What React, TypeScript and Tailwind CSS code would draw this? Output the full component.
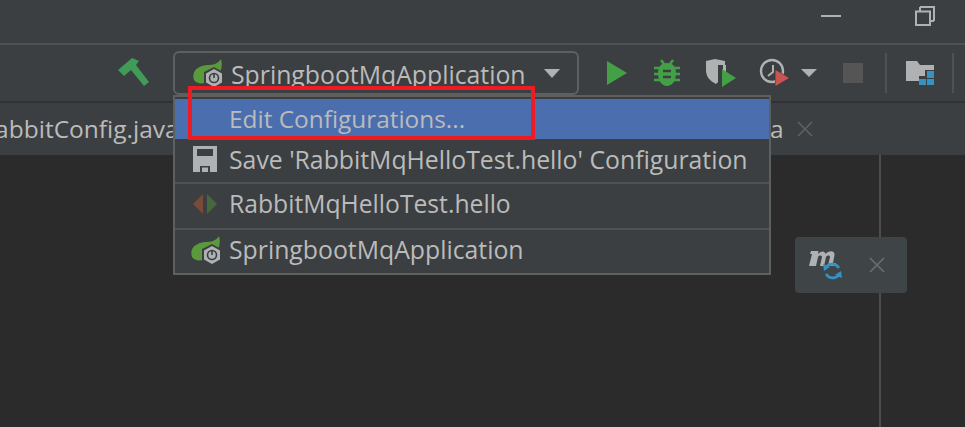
const font = { fontFamily: '"Open Sans", "Noto Sans", sans-serif' }

function SpringIcon() {
  return (
    <svg width="32" height="28" viewBox="0 0 32 28" className="shrink-0">
      <path d="M1 21 C-2 11 6 7 14 6 C20 6 25 5 28 0 C30 7 28 13 24 17 L12 24 C7 25 3 24 1 21Z" fill="#5b9a3c" />
      <path d="M21 8 L30 13 L30 24 L21 29 L11 24 L11 13 Z" fill="#3c3f41" />
      <path d="M21 10 L29 14.500 L29 23.500 L21 28 L13 23.500 L13 14.500 Z" fill="#afb1b3" />
      <circle cx="21" cy="19" r="4.500" fill="none" stroke="#3c3f41" strokeWidth="1.600" />
      <path d="M21 15 V19" stroke="#3c3f41" strokeWidth="1.600" />
    </svg>
  )
}

function HammerIcon() {
  return (
    <svg width="34" height="32" viewBox="0 0 34 32">
      <path d="M1 13 L15 1 L22 4 L19 8 L32 25 L27 29 L14 13 L7 19 Z" fill="#3f9b57" />
    </svg>
  )
}

function BugIcon() {
  return (
    <svg width="26" height="28" viewBox="0 0 26 28">
      <path d="M7 1 L10 5 M19 1 L16 5" stroke="#43a047" strokeWidth="2.500" />
      <path d="M0 9 H26 M0 15 H26 M0 21 H26" stroke="#43a047" strokeWidth="2.500" />
      <path d="M13 4 C19 4 22 8 22 14 C22 22 18 27 13 27 C8 27 4 22 4 14 C4 8 7 4 13 4Z" fill="#43a047" />
      <path d="M9 12 H17 M9 18 H17" stroke="#3c3f41" strokeWidth="2.500" />
    </svg>
  )
}

function CoverageIcon() {
  return (
    <svg width="32" height="30" viewBox="0 0 32 30">
      <path d="M1 3 L10 1 L20 3 L20 7 L13 7 L13 24 L11 26 C5 23 1 19 1 12Z" fill="#afb1b3" />
      <path d="M18 7 H21 V14 L18 18Z" fill="#afb1b3" />
      <path d="M17 11 L31 20 L17 29Z" fill="#43a047" />
    </svg>
  )
}

function ProfilerIcon() {
  return (
    <svg width="32" height="30" viewBox="0 0 32 30">
      <circle cx="13" cy="13" r="11" fill="none" stroke="#afb1b3" strokeWidth="2.400" />
      <path d="M14 7 V14 L9 18" fill="none" stroke="#afb1b3" strokeWidth="2" />
      <path d="M16 11 L31 20 L16 29Z" fill="#3c3f41" />
      <path d="M16.500 12 L30 20 L16.500 28Z" fill="#c75450" />
    </svg>
  )
}

function FolderIcon() {
  return (
    <svg width="30" height="26" viewBox="0 0 30 26">
      <path d="M1 1 H12 L15 5 H29 V10 H20 V16 H14 V21 H1 Z" fill="#afb1b3" />
      <path d="M22 11 H29 V18 H22Z M14 19 H21 V25 H14Z M22 19 H29 V25 H22Z" fill="#3592c4" />
    </svg>
  )
}

function SaveIcon() {
  return (
    <svg width="24" height="26" viewBox="0 0 24 26" className="shrink-0">
      <path d="M0 0 H24 V26 H0Z" fill="#afb1b3" />
      <path d="M4 3 H20 V10 H4Z" fill="#3c3f41" />
      <path d="M7 20 H17 V26 H7Z" fill="#3c3f41" />
      <path d="M9 21.500 H15 V26 H9Z" fill="#afb1b3" />
    </svg>
  )
}

function RunConfigIcon() {
  return (
    <svg width="24" height="20" viewBox="0 0 24 20" className="shrink-0">
      <path d="M10 0 V20 L0 10Z" fill="#7a4b38" />
      <path d="M14 0 V20 L24 10Z" fill="#47683f" />
    </svg>
  )
}

function MavenIcon() {
  return (
    <svg width="34" height="32" viewBox="0 0 34 32">
      <path d="M0 17 L3 5 L1 5 L2 2 H9.500 L9 5 C12 1.500 16 1.500 16.500 5 C19.500 1.500 26 1 25.500 6 L24 14 H27 L26 17 H19 L21 8 C21 6 18 6 17 8 L15 17 H11 L13 8 C13 6 10 6 9 8 L7 17Z" fill="#afb1b3" />
      <path d="M30 19 A8 8 0 0 0 17 18 M17 25 A8 8 0 0 0 30 26" fill="none" stroke="#3592c4" strokeWidth="2.600" />
      <path d="M14 15 L21 18 L15 22Z M33 29 L26 26 L32 22Z" fill="#3592c4" />
    </svg>
  )
}

function CloseX({ color, size }: { color: string; size: number }) {
  return (
    <svg width={size} height={size} viewBox="0 0 16 16">
      <path d="M1 1 L15 15 M15 1 L1 15" stroke={color} strokeWidth="1.600" />
    </svg>
  )
}

const popupRows = [
  { label: "Save 'RabbitMqHelloTest.hello' Configuration", icon: <SaveIcon />, boxed: false, size: 'text-[24.800px]' },
  { label: 'RabbitMqHelloTest.hello', icon: <RunConfigIcon />, boxed: true, size: 'text-[24.700px]' },
  { label: 'SpringbootMqApplication', icon: <div className="ml-[-2px]"><SpringIcon /></div>, boxed: true, size: 'text-[24.800px]' },
]

export default function App() {
  return (
    <div className="relative flex h-[427px] w-[965px] flex-col overflow-hidden bg-[#3c3f41] text-[#bbbbbb]" style={font}>
      {/* title bar */}
      <div className="flex h-[43px] items-center justify-end">
        <div className="mr-[30px] mt-[-12px] flex items-center">
          <div className="mr-[74px] mt-[1px] h-[2px] w-[20px] bg-[#afb1b3]" />
          <svg width="20" height="20" viewBox="0 0 20 20">
            <path d="M5 1 H19 V15" fill="none" stroke="#afb1b3" strokeWidth="2" />
            <path d="M5 1 V5 M19 15 H15" fill="none" stroke="#afb1b3" strokeWidth="2" />
            <path d="M1 5.500 H15 V19 H1Z" fill="none" stroke="#afb1b3" strokeWidth="2" />
          </svg>
        </div>
      </div>
      <div className="h-[2px] bg-[#515151]" />

      {/* toolbar */}
      <div className="flex h-[56px] items-center pl-[117px]">
        <HammerIcon />
        <div className="ml-[22px] flex h-[44px] w-[406px] items-center rounded-[6px] border-2 border-[#5e6060] pl-[18px]">
          <SpringIcon />
          <span className="ml-[6px] mt-[2px] text-[24.800px] leading-none">SpringbootMqApplication</span>
          <div className="ml-[18px] h-0 w-0 border-x-[8px] border-t-[9px] border-x-transparent border-t-[#afb1b3]" />
        </div>
        <div className="ml-[28px] h-0 w-0 border-y-[12px] border-l-[20px] border-y-transparent border-l-[#43a047]" />
        <div className="ml-[27px]"><BugIcon /></div>
        <div className="ml-[25px]"><CoverageIcon /></div>
        <div className="ml-[22px]"><ProfilerIcon /></div>
        <div className="ml-[10px] h-0 w-0 border-x-[8px] border-t-[8px] border-x-transparent border-t-[#afb1b3]" />
        <div className="ml-[26px] h-[20px] w-[20px] bg-[#555555]" />
        <div className="ml-[22px] h-[40px] w-[2px] bg-[#515151]" />
        <div className="ml-[18px]"><FolderIcon /></div>
        <div className="ml-[17px] h-[40px] w-[2px] bg-[#515151]" />
      </div>
      <div className="h-[2px] bg-[#323232]" />

      {/* tabs */}
      <div className="flex h-[52px] items-center text-[24.500px]">
        <span className="ml-[-20px] mt-[1px] w-[790px] shrink-0 overflow-hidden whitespace-nowrap">RabbitConfig.java</span>
        <span className="mt-[1px] w-[14px]">a</span>
        <div className="ml-[13px] flex items-center"><CloseX color="#5f6163" size={16} /></div>
      </div>

      {/* editor */}
      <div className="flex-1 bg-[#2b2b2b] pl-[879px]">
        <div className="h-full w-[2px] bg-[#4d4d4d]" />
      </div>

      {/* run configurations popup */}
      <div className="absolute left-[173px] top-[95px] flex h-[180px] w-[598px] flex-col border-2 border-[#5e6060] bg-[#3c3f41]">
        <div className="mt-[2px] flex h-[40px] items-center bg-[#4b6eaf] pl-[54px] text-[24.400px]">
          <span className="leading-none">Edit Configurations...</span>
        </div>
        {popupRows.map((row) => (
          <div
            key={row.label}
            className={`flex flex-1 items-center pb-[3px] pl-[18px] ${row.size} ${row.boxed ? 'border-t-2 border-[#515151]' : ''}`}
          >
            <div className="flex w-[36px] justify-start">{row.icon}</div>
            <span className="leading-none whitespace-nowrap">{row.label}</span>
          </div>
        ))}
      </div>

      {/* annotation */}
      <div className="absolute left-[188px] top-[86px] h-[54px] w-[347px] border-[4px] border-[#ed1c24]" />

      {/* maven notification */}
      <div className="absolute left-[795px] top-[237px] flex h-[56px] w-[112px] items-center rounded-[4px] bg-[#3f4547] pl-[14px]">
        <MavenIcon />
        <div className="ml-[26px]"><CloseX color="#6a6e70" size={16} /></div>
      </div>
    </div>
  )
}
